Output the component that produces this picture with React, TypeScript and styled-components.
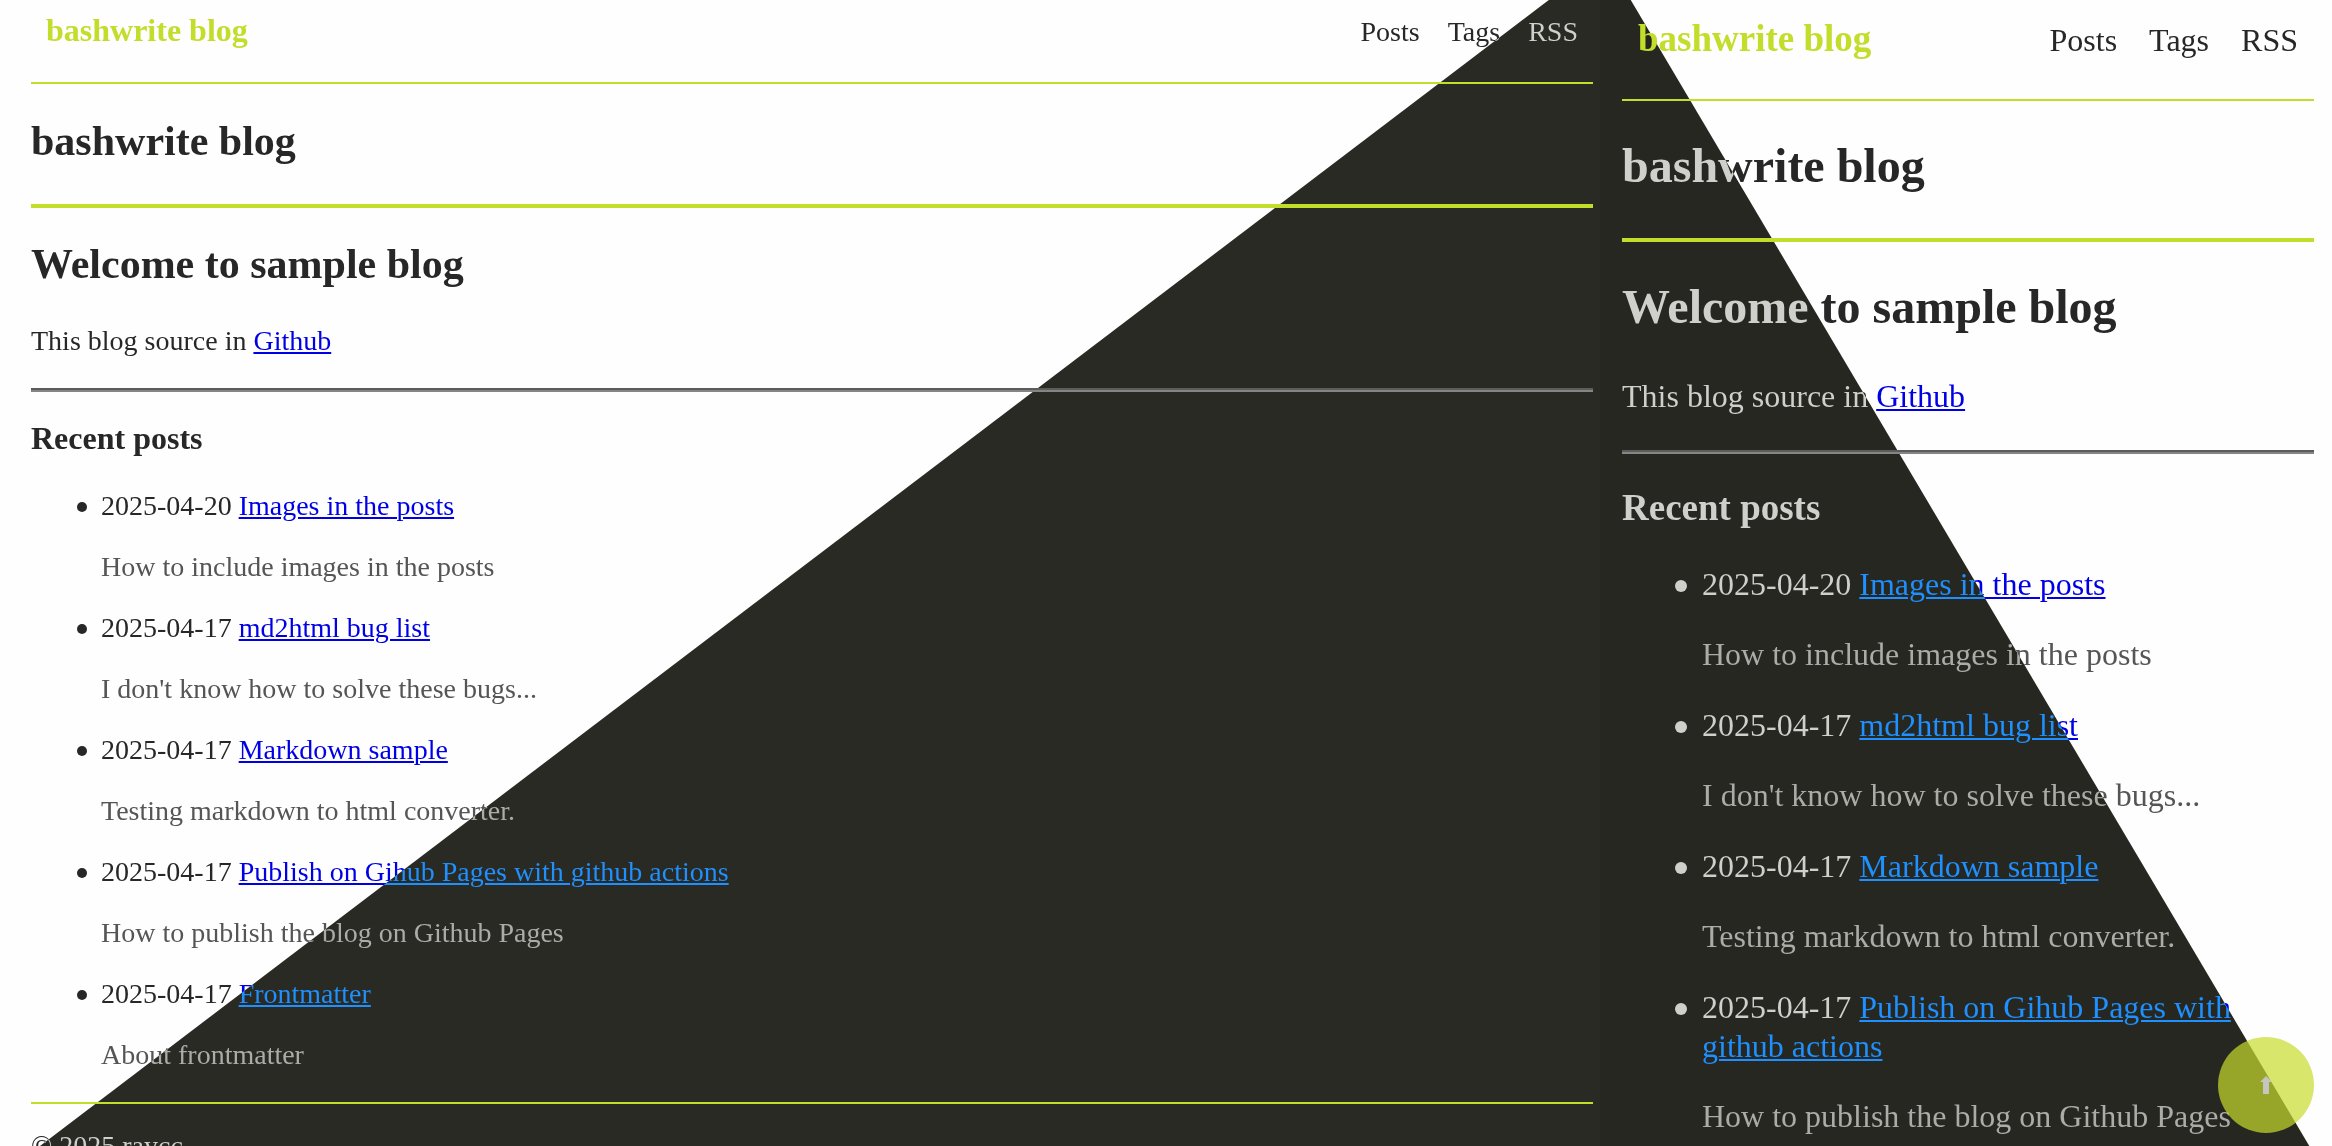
import React from "react";
import styled, { createGlobalStyle, css, ThemeProvider } from "styled-components";

type RGB = [number, number, number];

const accent = "#c3dd2b";

const light = {
  paper: [254, 254, 254] as RGB,
  ink: [39, 39, 39] as RGB,
  dim: "#555555",
  link: [0, 0, 230] as RGB,
};

const rgb = (c: RGB) => `rgb(${c.join(", ")})`;

/* Colour matrix that turns the light palette's paper, ink and link into the dark ones. */
function darkMatrix(dark: { paper: RGB; ink: RGB; link: RGB }) {
  const rows = [0, 1, 2].map((i) => {
    const slope = (dark.paper[i] - dark.ink[i]) / (light.paper[i] - light.ink[i]);
    const base = dark.ink[i] - slope * light.ink[i];
    const blue = (dark.link[i] - base) / light.link[2];
    const rest = (slope - blue) / 2;
    return [rest, rest, blue, 0, base / 255].join(" ");
  });
  return [...rows, "0 0 0 1 0"].join(" ");
}

const wideTheme = {
  name: "wide",
  dark: {
    paper: [41, 42, 36] as RGB,
    ink: [207, 207, 204] as RGB,
    link: [30, 144, 255] as RGB,
  },
  shade: "polygon(96.8% 0, 100% 0, 100% 100%, 2.5% 100%)",
  pad: { left: 31, right: 7 },
  text: { size: 28, line: 34 },
  small: { size: 32, line: 36 },
  large: { size: 42, line: 48 },
  header: { top: 12, side: 15, bottom: 33, gap: 28 },
  titleMargin: "33px 0 39px",
  welcomeMargin: "32px 0 36px",
  introMargin: "0 0 30px",
  recentMargin: "28px 0 33px",
  list: { indent: 70, before: 27, after: 27 },
  dot: { size: 10, left: -24, top: 13 },
};

const narrowTheme: typeof wideTheme = {
  name: "narrow",
  dark: {
    paper: [38, 39, 32],
    ink: [207, 207, 204],
    link: [30, 144, 255],
  },
  shade: "polygon(0 0, 4.2% 0, 96.9% 100%, 0 100%)",
  pad: { left: 22, right: 18 },
  text: { size: 32, line: 39 },
  small: { size: 37, line: 42 },
  large: { size: 48, line: 54 },
  header: { top: 18, side: 16, bottom: 39, gap: 32 },
  titleMargin: "38px 0 45px",
  welcomeMargin: "38px 0 43px",
  introMargin: "0 0 34px",
  recentMargin: "33px 0 36px",
  list: { indent: 80, before: 31, after: 32 },
  dot: { size: 12, left: -27, top: 15 },
};

type PaneTheme = typeof wideTheme;
const t = (p: { theme: any }) => p.theme as PaneTheme;

const GlobalStyle = createGlobalStyle`
  *, *::before, *::after { box-sizing: border-box; }
  body {
    margin: 0;
    font-family: "Liberation Serif", "Times New Roman", Times, serif;
  }
`;

const Screens = styled.div`
  display: grid;
  grid-template-columns: 1600fr 732fr;
  height: 100vh;
  overflow: hidden;
`;

const Pane = styled.section`
  position: relative;
  min-width: 0;
  overflow: hidden;
  padding: 0 ${(p) => t(p).pad.right}px 0 ${(p) => t(p).pad.left}px;
  font-size: ${(p) => t(p).text.size}px;
  line-height: ${(p) => t(p).text.line}px;
  color: ${rgb(light.ink)};
  background: ${rgb(light.paper)};
`;

/* The diagonal shade: whatever lies under it is shown in the dark palette. */
const Shade = styled.div`
  position: absolute;
  inset: 0;
  z-index: 1;
  pointer-events: none;
  clip-path: ${(p) => t(p).shade};
  backdrop-filter: url(#dark-${(p) => t(p).name});
`;

const FilterDefs = styled.svg`
  position: absolute;
  width: 0;
  height: 0;
`;

const aboveShade = css`
  position: relative;
  z-index: 2;
`;

const Header = styled.header`
  display: flex;
  align-items: baseline;
  justify-content: space-between;
  padding: ${(p) => {
    const h = t(p).header;
    return `${h.top}px ${h.side}px ${h.bottom}px`;
  }};
`;

const smallHeading = css`
  font-size: ${(p: { theme: any }) => t(p).small.size}px;
  line-height: ${(p: { theme: any }) => t(p).small.line}px;
  font-weight: bold;
`;

const largeHeading = css`
  font-size: ${(p: { theme: any }) => t(p).large.size}px;
  line-height: ${(p: { theme: any }) => t(p).large.line}px;
  font-weight: bold;
`;

const Logo = styled.a`
  ${smallHeading}
  ${aboveShade}
  color: ${accent};
  text-decoration: none;
`;

const Nav = styled.nav`
  display: flex;
  gap: ${(p) => t(p).header.gap}px;
`;

const NavLink = styled.a`
  color: inherit;
  text-decoration: none;
`;

const Rule = styled.hr<{ $weight: "thin" | "thick" | "grey" }>`
  ${aboveShade}
  margin: 0;
  border: 0;
  ${({ $weight }) =>
    $weight === "grey"
      ? "border-top: 2px solid #5c5c5c; border-bottom: 2px solid #858585;"
      : `border-top: ${$weight === "thin" ? 2 : 4}px solid ${accent};`}
`;

const Title = styled.h1`
  ${largeHeading}
  margin: ${(p) => t(p).titleMargin};
`;

const Welcome = styled.h2`
  ${largeHeading}
  margin: ${(p) => t(p).welcomeMargin};
`;

const Recent = styled.h3`
  ${smallHeading}
  margin: ${(p) => t(p).recentMargin};
`;

const Intro = styled.p`
  margin: ${(p) => t(p).introMargin};
`;

const Link = styled.a`
  color: ${rgb(light.link)};
  text-decoration: underline;
  text-decoration-thickness: 2px;
  text-underline-offset: 2px;
`;

const Posts = styled.ul`
  margin: 0;
  padding: 0 0 0 ${(p) => t(p).list.indent}px;
  list-style: none;
`;

const Post = styled.li`
  position: relative;

  &::before {
    content: "";
    position: absolute;
    left: ${(p) => t(p).dot.left}px;
    top: ${(p) => t(p).dot.top}px;
    width: ${(p) => t(p).dot.size}px;
    height: ${(p) => t(p).dot.size}px;
    border-radius: 50%;
    background: currentColor;
  }
`;

const Summary = styled.p`
  color: ${light.dim};
  margin: ${(p) => {
    const l = t(p).list;
    return `${l.before}px 0 ${l.after}px`;
  }};
`;

const Footer = styled.footer`
  margin-top: 30px;
`;

const Copyright = styled.p`
  margin: 25px 0 0;
`;

const ToTop = styled.button`
  position: absolute;
  z-index: 3;
  right: 18px;
  bottom: 13px;
  display: grid;
  place-items: center;
  width: 96px;
  height: 96px;
  padding: 0;
  border: 0;
  border-radius: 50%;
  background: rgba(200, 219, 46, 0.7);
`;

const ArrowUp = () => (
  <svg width="12" height="18" viewBox="0 0 12 18" aria-hidden="true">
    <path d="M6 0 L12 6 H9 V18 H3 V6 H0 Z" fill="#c6c6c0" />
  </svg>
);

const posts = [
  { date: "2025-04-20", title: "Images in the posts", summary: "How to include images in the posts" },
  { date: "2025-04-17", title: "md2html bug list", summary: "I don't know how to solve these bugs..." },
  { date: "2025-04-17", title: "Markdown sample", summary: "Testing markdown to html converter." },
  {
    date: "2025-04-17",
    title: "Publish on Gihub Pages with github actions",
    summary: "How to publish the blog on Github Pages",
  },
  { date: "2025-04-17", title: "Frontmatter", summary: "About frontmatter" },
];

function Blog({ count, children }: { count: number; children?: React.ReactNode }) {
  return (
    <Pane>
      <Header>
        <Logo href="#">bashwrite blog</Logo>
        <Nav>
          <NavLink href="#posts">Posts</NavLink>
          <NavLink href="#tags">Tags</NavLink>
          <NavLink href="#rss">RSS</NavLink>
        </Nav>
      </Header>
      <Rule $weight="thin" />
      <Title>bashwrite blog</Title>
      <Rule $weight="thick" />
      <Welcome>Welcome to sample blog</Welcome>
      <Intro>
        This blog source in <Link href="#github">Github</Link>
      </Intro>
      <Rule $weight="grey" />
      <Recent>Recent posts</Recent>
      <Posts>
        {posts.slice(0, count).map((post) => (
          <Post key={post.title}>
            <time>{post.date}</time> <Link href="#post">{post.title}</Link>
            <Summary>{post.summary}</Summary>
          </Post>
        ))}
      </Posts>
      {children}
      <Shade />
    </Pane>
  );
}

export default function App() {
  return (
    <>
      <GlobalStyle />
      <FilterDefs aria-hidden="true">
        {[wideTheme, narrowTheme].map((theme) => (
          <filter key={theme.name} id={`dark-${theme.name}`} colorInterpolationFilters="sRGB">
            <feColorMatrix type="matrix" values={darkMatrix(theme.dark)} />
          </filter>
        ))}
      </FilterDefs>
      <Screens>
        <ThemeProvider theme={wideTheme}>
          <Blog count={5}>
            <Footer>
              <Rule $weight="thin" />
              <Copyright>© 2025 raycc</Copyright>
            </Footer>
          </Blog>
        </ThemeProvider>
        <ThemeProvider theme={narrowTheme}>
          <Blog count={4}>
            <ToTop type="button" aria-label="Back to top">
              <ArrowUp />
            </ToTop>
          </Blog>
        </ThemeProvider>
      </Screens>
    </>
  );
}
